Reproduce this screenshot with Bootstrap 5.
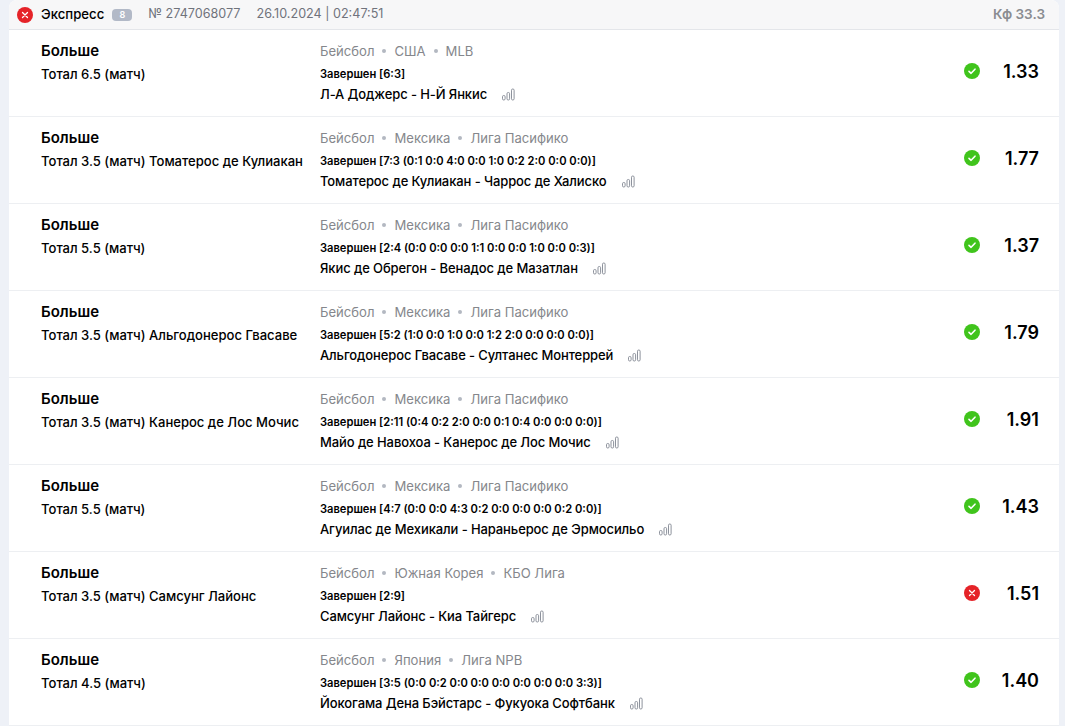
<!DOCTYPE html>
<html lang="ru">
<head>
<meta charset="utf-8">
<title>Экспресс</title>
<link href="https://cdn.jsdelivr.net/npm/bootstrap@5.3.0/dist/css/bootstrap.min.css" rel="stylesheet">
<style>
html,body{height:726px;overflow:hidden}
body{background:#eef1f7;font-family:Inter,"Liberation Sans",sans-serif;color:#000}
.bet-card{margin:0 6px 0 9px;background:#fff;border-top-left-radius:8px;border-top-right-radius:8px;overflow:hidden}
.bet-head{height:30px;background:#f7f7f8;border-bottom:1px solid #e4e6ea;padding:0 14px 0 8px}
.bet-title{font-size:13.2px;font-weight:500;margin-left:8px}
.bet-count{background:#b2b9c7;color:#fff;font-size:9px;font-weight:600;border-radius:4px;width:20px;height:12px;line-height:12px;text-align:center;margin-left:8px}
.bet-num,.bet-date{font-size:12.6px;color:#70737c}
.bet-num{margin-left:16px}
.bet-date{margin-left:16px}
.bet-total{font-size:13.5px;font-weight:600;color:#8a8c91}
.bet-row{height:87px;border-bottom:1px solid #edeff2;padding:0 20px 0 32px}
.col-market{width:279px;flex:none;padding-top:11px}
.m-kind{font-size:15px;font-weight:600;line-height:20px}
.m-line{font-size:13.05px;font-weight:500;line-height:16px;margin-top:5px;white-space:nowrap}
.col-event{padding-top:11px;min-width:0}
.e-sport{font-size:13.1px;color:#85878c;line-height:20px;display:flex;align-items:center;white-space:nowrap}
.e-sport i{width:4px;height:4px;border-radius:50%;background:#b3b8c1;margin:0 8px}
.e-status{font-size:11.15px;font-weight:600;line-height:14px;margin-top:6px;white-space:nowrap}
.e-teams{font-size:13px;font-weight:500;letter-spacing:-.1px;line-height:16px;margin-top:5px;white-space:nowrap;display:flex;align-items:center}
.e-teams svg{margin-left:15px}
.col-res{flex:none}
.col-res .inner{height:20px;margin-top:31px;display:flex;align-items:center;justify-content:flex-end}
.coef{font-size:18px;font-weight:600;width:59px;text-align:right}
</style>
</head>
<body>
<div class="bet-card">
  <div class="bet-head d-flex align-items-center">
    <svg width="16" height="16" viewBox="0 0 16 16"><circle cx="8" cy="8" r="8" fill="#e52328"/><path d="M5.5 5.5l5 5M10.5 5.5l-5 5" stroke="#fff" stroke-width="1.3" stroke-linecap="round"/></svg>
    <span class="bet-title">Экспресс</span>
    <span class="bet-count">8</span>
    <span class="bet-num">№ 2747068077</span>
    <span class="bet-date">26.10.2024 | 02:47:51</span>
    <span class="bet-total ms-auto">Кф 33.3</span>
  </div>
  <div id="rows"></div>
</div>
<script>
const data=[
["Тотал 6.5 (матч)","США","MLB","Завершен [6:3]","Л-А Доджерс - Н-Й Янкис","1.33",1],
["Тотал 3.5 (матч) Томатерос де Кулиакан","Мексика","Лига Пасифико","Завершен [7:3 (0:1 0:0 4:0 0:0 1:0 0:2 2:0 0:0 0:0)]","Томатерос де Кулиакан - Чаррос де Халиско","1.77",1],
["Тотал 5.5 (матч)","Мексика","Лига Пасифико","Завершен [2:4 (0:0 0:0 0:0 1:1 0:0 0:0 1:0 0:0 0:3)]","Якис де Обрегон - Венадос де Мазатлан","1.37",1],
["Тотал 3.5 (матч) Альгодонерос Гвасаве","Мексика","Лига Пасифико","Завершен [5:2 (1:0 0:0 1:0 0:0 1:2 2:0 0:0 0:0 0:0)]","Альгодонерос Гвасаве - Султанес Монтеррей","1.79",1],
["Тотал 3.5 (матч) Канерос де Лос Мочис","Мексика","Лига Пасифико","Завершен [2:11 (0:4 0:2 2:0 0:0 0:1 0:4 0:0 0:0 0:0)]","Майо де Навохоа - Канерос де Лос Мочис","1.91",1],
["Тотал 5.5 (матч)","Мексика","Лига Пасифико","Завершен [4:7 (0:0 0:0 4:3 0:2 0:0 0:0 0:0 0:2 0:0)]","Агуилас де Мехикали - Нараньерос де Эрмосильо","1.43",1],
["Тотал 3.5 (матч) Самсунг Лайонс","Южная Корея","КБО Лига","Завершен [2:9]","Самсунг Лайонс - Киа Тайгерс","1.51",0],
["Тотал 4.5 (матч)","Япония","Лига NPB","Завершен [3:5 (0:0 0:2 0:0 0:0 0:0 0:0 0:0 0:0 3:3)]","Йокогама Дена Бэйстарс - Фукуока Софтбанк","1.40",1]
];
const ok='<svg width="16" height="16" viewBox="0 0 16 16"><circle cx="8" cy="8" r="8" fill="#40c41c"/><path d="M5 8.3l2.1 2L11 6.2" fill="none" stroke="#fff" stroke-width="1.6" stroke-linecap="round" stroke-linejoin="round"/></svg>';
const no='<svg width="16" height="16" viewBox="0 0 16 16"><circle cx="8" cy="8" r="8" fill="#e52328"/><path d="M5.5 5.5l5 5M10.5 5.5l-5 5" stroke="#fff" stroke-width="1.3" stroke-linecap="round"/></svg>';
const bars='<svg width="13" height="13" viewBox="0 0 13 13" fill="none" stroke="#8d929c" stroke-width="1"><rect x=".5" y="7.5" width="2.6" height="4.5" rx="1.2"/><rect x="5" y="4.5" width="2.6" height="7.5" rx="1.2"/><rect x="9.5" y="1" width="2.6" height="11" rx="1.2"/></svg>';
document.getElementById('rows').innerHTML=data.map(d=>`
<div class="bet-row d-flex">
  <div class="col-market"><div class="m-kind">Больше</div><div class="m-line">${d[0]}</div></div>
  <div class="col-event flex-grow-1">
    <div class="e-sport">Бейсбол<i></i>${d[1]}<i></i>${d[2]}</div>
    <div class="e-status">${d[3]}</div>
    <div class="e-teams">${d[4]}${bars}</div>
  </div>
  <div class="col-res"><div class="inner">${d[6]?ok:no}<span class="coef">${d[5]}</span></div></div>
</div>`).join('');
</script>
</body>
</html>
